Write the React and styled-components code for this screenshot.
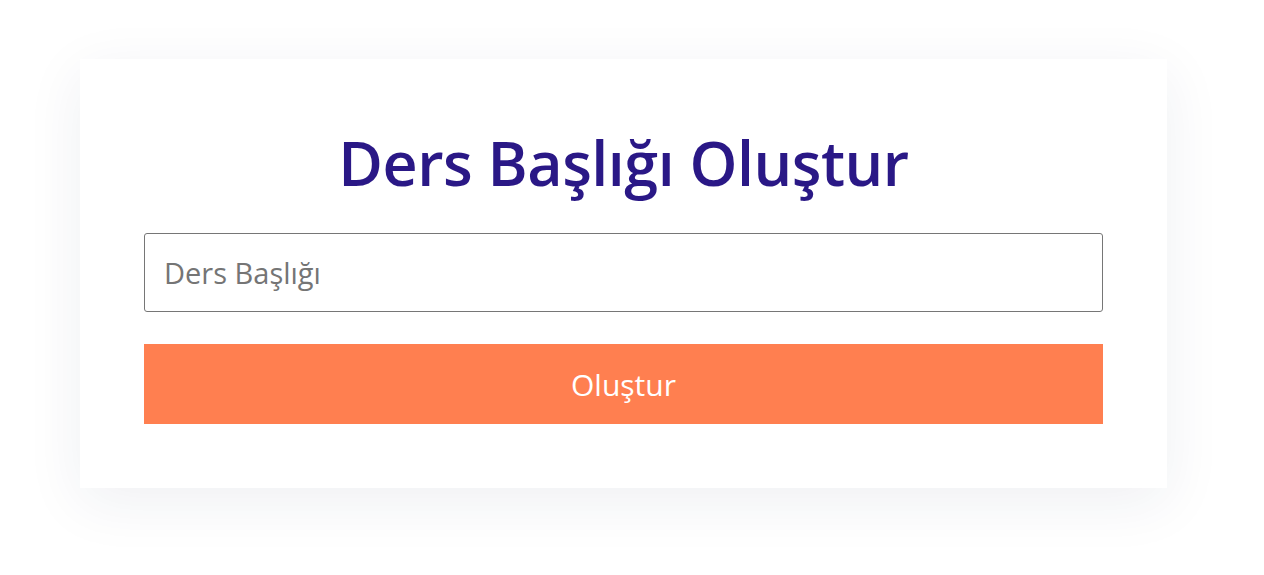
import styled, { createGlobalStyle } from "styled-components";

const GlobalStyle = createGlobalStyle`
  html, body {
    margin: 0;
    padding: 0;
    background: #fff;
    font-family: "Open Sans", "Noto Sans", sans-serif;
  }
`;

const Page = styled.div`
  width: 1247px;
  min-height: 575px;
  box-sizing: border-box;
  display: flex;
  justify-content: center;
  align-items: flex-start;
  padding-top: 59px;
`;

const Card = styled.form`
  width: 1087px;
  box-sizing: border-box;
  padding: 65px 64px 64px;
  background: #fff;
  box-shadow: 0 14px 55px rgba(30, 40, 80, 0.07);
  display: flex;
  flex-direction: column;
`;

const Title = styled.h1`
  margin: 0 0 32px;
  text-align: center;
  font-size: 61px;
  line-height: 77px;
  font-weight: 600;
  color: #2a1886;
  letter-spacing: -0.5px;
`;

const Input = styled.input`
  box-sizing: border-box;
  width: 100%;
  height: 79px;
  padding: 0 19px;
  border: 1px solid #767676;
  border-radius: 3px;
  font-family: inherit;
  font-size: 29px;
  color: #333;
  outline: none;

  &::placeholder {
    color: #757575;
  }
`;

const Button = styled.button`
  margin-top: 32px;
  height: 80px;
  border: none;
  background: coral;
  color: #fff;
  font-family: inherit;
  font-size: 30px;
  cursor: pointer;
`;

export default function App() {
  return (
    <>
      <GlobalStyle />
      <Page>
        <Card onSubmit={(e) => e.preventDefault()}>
          <Title>Ders Başlığı Oluştur</Title>
          <Input type="text" placeholder="Ders Başlığı" />
          <Button type="submit">Oluştur</Button>
        </Card>
      </Page>
    </>
  );
}
